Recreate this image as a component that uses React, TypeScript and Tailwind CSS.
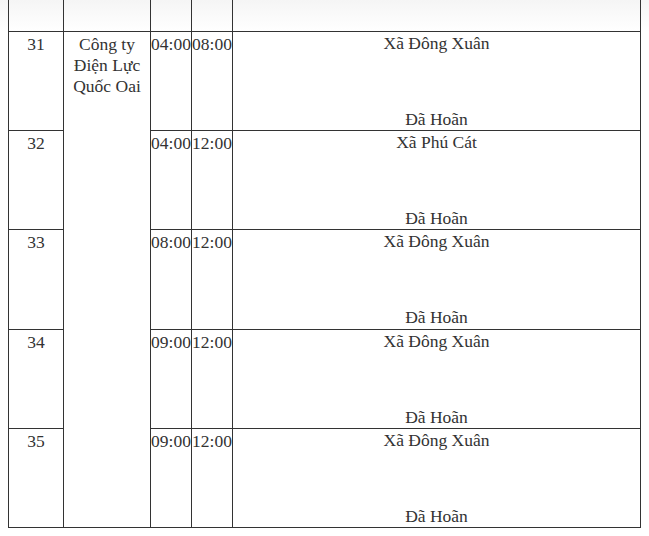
const rows = [
  { no: "31", from: "04:00", to: "08:00", place: "Xã Đông Xuân" },
  { no: "32", from: "04:00", to: "12:00", place: "Xã Phú Cát" },
  { no: "33", from: "08:00", to: "12:00", place: "Xã Đông Xuân" },
  { no: "34", from: "09:00", to: "12:00", place: "Xã Đông Xuân" },
  { no: "35", from: "09:00", to: "12:00", place: "Xã Đông Xuân" },
];

// cells share the same border and serif text
const cell =
  "border border-[#333] p-0 align-top text-center [font-family:'Liberation_Serif',serif] text-[17.5px] leading-[21px] text-[#333]";

function App() {
  return (
    <div className="relative w-[649px] h-[536px] bg-white overflow-hidden [font-family:'Liberation_Serif',serif]">
      <div className="bg-gradient-to-b from-[#f5f5f5] to-white h-[31px] absolute w-[649px] top-0 left-0" />
      <div className="relative pl-[8px]">
        <table className="border-collapse table-fixed w-[633px]">
          <colgroup>
            <col className="w-[55px]" />
            <col className="w-[87px]" />
            <col className="w-[41px]" />
            <col className="w-[41px]" />
            <col />
          </colgroup>
          <tbody>
            <tr className="h-[31px]">
              <td className={`${cell} border-t-0`} />
              <td className={`${cell} border-t-0`} />
              <td className={`${cell} border-t-0`} />
              <td className={`${cell} border-t-0`} />
              <td className={`${cell} border-t-0`} />
            </tr>
            {rows.map((r, i) => (
              <tr key={r.no} className={i === 2 ? "h-[100px]" : "h-[99px]"}>
                <td className={`${cell} pt-[2px]`}>{r.no}</td>
                {i === 0 && (
                  <td className={`${cell} pt-[2px]`} rowSpan={5}>
                    Công ty
                    <br />
                    Điện Lực
                    <br />
                    Quốc Oai
                  </td>
                )}
                <td className={`${cell} pt-[2px] whitespace-nowrap`}>{r.from}</td>
                <td className={`${cell} pt-[2px] whitespace-nowrap`}>{r.to}</td>
                <td className={cell}>
                  <div className="flex flex-col justify-between h-[98px] pt-[1px]">
                    <span>{r.place}</span>
                    <span>Đã Hoãn</span>
                  </div>
                </td>
              </tr>
            ))}
          </tbody>
        </table>
      </div>
    </div>
  );
}

export default App;
